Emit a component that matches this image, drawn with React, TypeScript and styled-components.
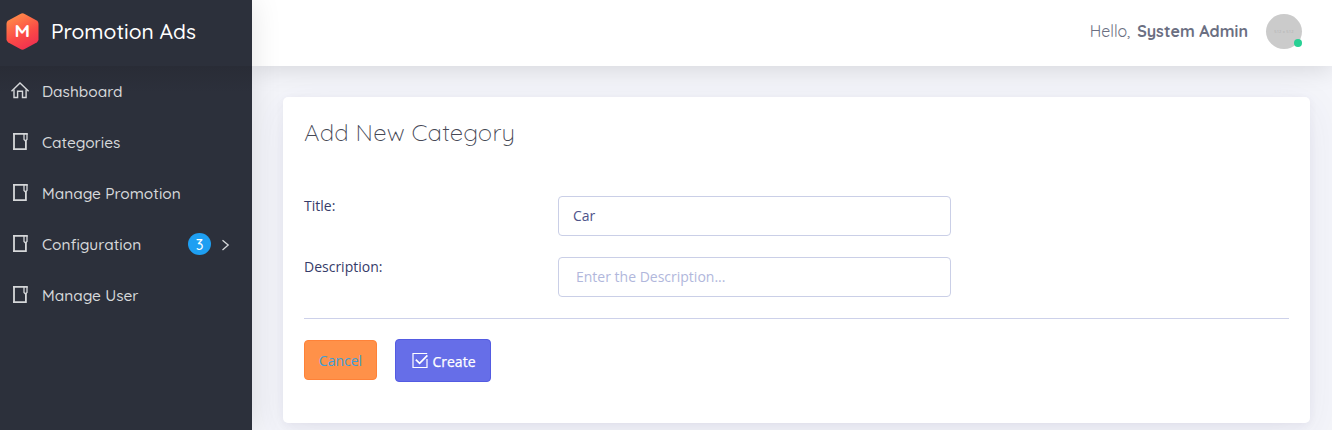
import React from "react";
import styled, { createGlobalStyle } from "styled-components";

const rounded = `"Quicksand", "Inter", "Lato", sans-serif`;

const GlobalStyle = createGlobalStyle`
  *, *::before, *::after { box-sizing: border-box; }
  body {
    margin: 0;
    background: #f4f5fa;
    font-family: "Open Sans", "Noto Sans", sans-serif;
    font-size: 14px;
    color: #464a7c;
    overflow: hidden;
  }
`;

const Page = styled.div`
  display: flex;
  height: 430px;
  overflow: hidden;
`;

const Sidebar = styled.aside`
  display: flex;
  flex-direction: column;
  flex: 0 0 252px;
  background: #2c303b;
  box-shadow: 1px 0 28px rgba(0, 0, 0, 0.1);
  z-index: 2;
`;

const Brand = styled.div`
  display: flex;
  align-items: center;
  height: 66px;
  padding: 0 0 4px 6px;
  gap: 12px;
`;

const Fit = styled.span<{ $spacing?: number }>`
  font-family: ${rounded};
  font-feature-settings: "cv11";
  letter-spacing: ${(p) => p.$spacing ?? 0}px;
  white-space: nowrap;
`;

const BrandName = styled(Fit)`
  color: #fff;
  font-size: 21px;
  font-weight: 500;
  line-height: 30px;
`;

const Menu = styled.nav`
  flex: 1;
  background: linear-gradient(#292c36, #2c303b 26px);
`;

const MenuItem = styled.a`
  display: flex;
  align-items: center;
  height: 51px;
  padding: 0 22px 0 11px;
  color: #d6d8da;
`;

const MenuIcon = styled.span`
  display: flex;
  width: 31px;
  height: 20px;
  margin-top: -4px;
`;

const MenuLabel = styled(Fit)`
  flex: 1;
  font-size: 15.45px;
  font-weight: 500;
  line-height: 20px;
`;

const Badge = styled.span`
  display: flex;
  align-items: center;
  justify-content: center;
  width: 23px;
  height: 22px;
  margin: -1px 10px 0 0;
  border-radius: 50%;
  background: #1e9ff2;
  color: #fff;
  font-family: ${rounded};
  font-size: 14.5px;
  font-weight: 500;
`;

const Main = styled.main`
  display: flex;
  flex: 1;
  flex-direction: column;
  min-width: 0;
`;

const TopBar = styled.header`
  display: flex;
  flex: 0 0 66px;
  align-items: center;
  justify-content: flex-end;
  padding: 0 30px 4px 0;
  background: #fff;
  box-shadow: 0 4px 25px rgba(0, 0, 0, 0.12);
  color: #6b6f82;
  z-index: 1;
`;

const Hello = styled(Fit)`
  margin-right: 7px;
  font-size: 16px;
  font-weight: 400;
`;

const UserName = styled(Fit)`
  margin-right: 18px;
  font-size: 16px;
  font-weight: 700;
`;

const Avatar = styled.span`
  position: relative;
  display: flex;
  align-items: center;
  justify-content: center;
  width: 36px;
  height: 35px;
  border-radius: 50%;
  background: #cbcbcb;
  color: #b0b0b0;
  font-size: 4px;
  letter-spacing: 0.2px;
`;

const Online = styled.i`
  position: absolute;
  right: 0;
  bottom: 2px;
  width: 8px;
  height: 8px;
  border-radius: 50%;
  background: #28d094;
`;

const Card = styled.section`
  display: flex;
  flex-direction: column;
  width: 1027px;
  height: 326px;
  margin: 31px 0 0 31px;
  padding: 19px 21px;
  border-radius: 5px;
  background: #fff;
  box-shadow: 0 10px 40px rgba(62, 57, 107, 0.07), 0 2px 9px rgba(62, 57, 107, 0.06);
`;

const Heading = styled.h4`
  display: flex;
  height: 32px;
  margin: 0 0 48px;
  color: #464855;
  font-size: 24px;
  font-weight: 350;
  line-height: 32px;
`;

const Field = styled.div`
  display: flex;
  height: 40px;
  margin-bottom: 21px;
`;

const Label = styled.label`
  width: 254px;
  color: #363b69;
  line-height: 20px;
`;

const Input = styled.input<{ $indent: number }>`
  width: 393px;
  height: 40px;
  padding: 0 14px 2px ${(p) => p.$indent}px;
  border: 1px solid #cacfe7;
  border-radius: 4px;
  outline: none;
  color: #4e5389;
  font: inherit;
  &::placeholder { color: #b1b7dc; opacity: 1; }
`;

const Actions = styled.div`
  display: flex;
  align-items: flex-start;
  gap: 18px;
  padding-top: 20px;
  border-top: 1px solid #cdd1ea;
`;

const Button = styled.button<{ $primary?: boolean }>`
  display: flex;
  align-items: center;
  justify-content: center;
  gap: 5px;
  width: ${(p) => (p.$primary ? 96 : 73)}px;
  height: ${(p) => (p.$primary ? 43 : 40)}px;
  margin-top: ${(p) => (p.$primary ? 0 : 1)}px;
  padding: 0;
  border: 1px solid ${(p) => (p.$primary ? "#535be2" : "#ff8238")};
  border-radius: 4px;
  background: ${(p) => (p.$primary ? "#666ee8" : "#ff9149")};
  color: ${(p) => (p.$primary ? "#fff" : "#3d9fd6")};
  font: inherit;
  ${(p) => p.$primary && "-webkit-text-stroke: 0.25px #fff;"}
`;

const ButtonText = styled.span<{ $drop?: number }>`
  padding-top: ${(p) => p.$drop ?? 0}px;
`;

const Logo = () => (
  <svg width="33" height="37" viewBox="0 0 33 37">
    <defs>
      <linearGradient id="hex" x1="0.2" y1="0" x2="0.65" y2="1">
        <stop offset="0" stopColor="#ff9149" />
        <stop offset="0.6" stopColor="#fb4b46" />
        <stop offset="1" stopColor="#f03050" />
      </linearGradient>
    </defs>
    <path
      d="M14.3.9q2.2-1.2 4.400 0l12 6.700Q32.500 8.700 32.500 10.800v15.400q0 2.100-1.800 3.200l-12 6.700q-2.200 1.200-4.400 0l-12-6.700Q.5 28.300.5 26.200V10.800Q.5 8.700 2.300 7.600z"
      fill="url(#hex)"
    />
    <text transform="translate(16.2 24) scale(1.15 1)" textAnchor="middle" fontFamily={rounded} fontSize="16.500" fontWeight="700" fill="#fff">M</text>
  </svg>
);

const HomeIcon = () => (
  <svg width="20" height="20" viewBox="0 0 20 20" fill="none" stroke="currentColor" strokeWidth="1.400">
    <path d="M.5 11.300 9 3l8.600 8.300" />
    <path d="M3 9.500v8h3.600v-6.300h4.900v6.300h3.600v-8" />
  </svg>
);

const BookIcon = () => (
  <svg width="20" height="20" viewBox="0 0 20 20" fill="none" stroke="currentColor">
    <path d="M3 2v17" strokeWidth="1.800" />
    <path d="M2.100 2.900h14.600M2.100 18.100h13.500M14.900 9v9.900" strokeWidth="1.800" />
    <path d="M13 3v5.500l1.300 1.300 1.700-1.300V2.500" strokeWidth="1.300" />
  </svg>
);

const Chevron = () => (
  <svg width="9" height="12" viewBox="0 0 9 12" fill="none" stroke="currentColor" strokeWidth="1.300">
    <path d="M1.500 1.200 7.200 6l-5.700 4.900" />
  </svg>
);

const CheckMark = styled.svg`
  margin: -1px -1px 0 1px;
`;

const CheckIcon = () => (
  <CheckMark width="17" height="17" viewBox="0 0 17 17" fill="none" stroke="#fff">
    <path d="M16.200 1.500H2v14h14V7" strokeWidth="1.200" />
    <path d="m4.800 7.700 3.800 3.700 7.800-8" strokeWidth="1.700" />
  </CheckMark>
);

const items = [
  { label: "Dashboard", icon: <HomeIcon /> },
  { label: "Categories", icon: <BookIcon /> },
  { label: "Manage Promotion", icon: <BookIcon /> },
  { label: "Configuration", icon: <BookIcon />, count: 3 },
  { label: "Manage User", icon: <BookIcon /> },
];

export default function App() {
  return (
    <Page>
      <GlobalStyle />
      <Sidebar>
        <Brand>
          <Logo />
          <BrandName>Promotion Ads</BrandName>
        </Brand>
        <Menu>
          {items.map((item) => (
            <MenuItem key={item.label}>
              <MenuIcon>{item.icon}</MenuIcon>
              <MenuLabel>{item.label}</MenuLabel>
              {item.count && (
                <>
                  <Badge>{item.count}</Badge>
                  <Chevron />
                </>
              )}
            </MenuItem>
          ))}
        </Menu>
      </Sidebar>
      <Main>
        <TopBar>
          <Hello>Hello,</Hello>
          <UserName $spacing={0.07}>System Admin</UserName>
          <Avatar>
            512 x 512
            <Online />
          </Avatar>
        </TopBar>
        <Card>
          <Heading>
            <Fit $spacing={0.2}>Add New Category</Fit>
          </Heading>
          <Field>
            <Label htmlFor="title">Title:</Label>
            <Input id="title" $indent={14} defaultValue="Car" />
          </Field>
          <Field>
            <Label htmlFor="description">Description:</Label>
            <Input id="description" $indent={17} placeholder="Enter the Description..." />
          </Field>
          <Actions>
            <Button>
              <ButtonText>Cancel</ButtonText>
            </Button>
            <Button $primary>
              <CheckIcon />
              <ButtonText $drop={1}>Create</ButtonText>
            </Button>
          </Actions>
        </Card>
      </Main>
    </Page>
  );
}
